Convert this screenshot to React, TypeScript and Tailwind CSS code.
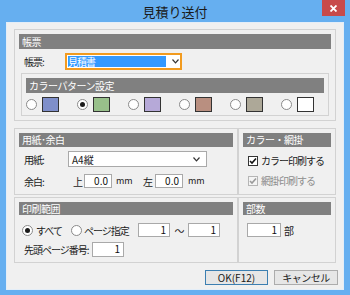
import React from "react";

const Radio = ({ checked = false }: { checked?: boolean }) => (
  <div className="w-[11px] h-[11px] rounded-full border border-[#8a8a8a] bg-white flex items-center justify-center shrink-0">
    {checked && <div className="w-[5px] h-[5px] rounded-full bg-[#1a1a1a]" />}
  </div>
);

const Check = ({ disabled = false }: { disabled?: boolean }) => (
  <div
    className={
      disabled
        ? "w-[10px] h-[10px] border border-[#b5b5b5] bg-[#f4f4f4] flex items-center justify-center shrink-0"
        : "w-[10px] h-[10px] border border-[#333333] bg-white flex items-center justify-center shrink-0"
    }
  >
    <svg width="8" height="8" viewBox="0 0 8 8">
      <path
        d="M1 4 L3 6 L7 1.5"
        fill="none"
        stroke={disabled ? "#9a9a9a" : "#111"}
        strokeWidth="1.6"
      />
    </svg>
  </div>
);

const Field = ({ value, className }: { value: string; className: string }) => (
  <div
    className={`bg-white border border-[#a9a9a9] text-right pr-[3px] text-[10px] leading-[12px] tracking-normal text-[#111] ${className}`}
  >
    {value}
  </div>
);

const Header = ({ title, className }: { title: string; className: string }) => (
  <div className={`bg-[#808080] text-white text-[10px] tracking-[-0.5px] pl-[3px] whitespace-nowrap ${className}`}>
    {title}
  </div>
);

const swatches = ["#7f8fca", "#98c08b", "#b6a9d8", "#b98f80", "#ada898", "#ffffff"];

export default function App() {
  return (
    <div className="w-[350px] h-[295px] bg-[#66aff0] flex flex-col font-['Noto_Sans_CJK_JP',sans-serif] text-[#1a1a1a] overflow-hidden whitespace-nowrap">
      {/* title bar */}
      <div className="h-[22px] relative flex items-center justify-center shrink-0">
        <span className="text-[13px] text-[#1a1a1a] leading-none">見積り送付</span>
        <div className="absolute right-[5px] top-0 w-[23px] h-[16px] bg-[#c84a4a] flex items-center justify-center">
          <svg width="7" height="7" viewBox="0 0 7 7">
            <path d="M0.5 0.5 L6.5 6.5 M6.5 0.5 L0.5 6.5" stroke="#fff" strokeWidth="1.8" />
          </svg>
        </div>
      </div>

      {/* client */}
      <div className="mx-[6px] h-[268px] bg-[#f0f0f0] border border-[#e4eef8] pl-[7px] pr-[7px] pt-[6px] flex flex-col text-[10px] tracking-[-1px]">
        {/* 帳票 */}
        <div className="w-[322px] border border-[#d2d2d2] p-[4px] pb-[4px]">
          <Header title="帳票" className="h-[15px] leading-[15px]" />
          <div className="flex items-center mt-[4px] h-[17px]">
            <span className="w-[46px] pl-[5px]">帳票:</span>
            <div className="w-[117px] h-[17px] border-[2px] border-[#f29b1f] bg-white flex items-center pl-[1px]">
              <span className="bg-[#3399ff] text-white leading-[11px] w-[98px] h-[11px]">見積書</span>
              <svg className="ml-[6px]" width="7" height="5" viewBox="0 0 7 5">
                <path d="M0.5 0.5 L3.5 3.8 L6.5 0.5" fill="none" stroke="#333" strokeWidth="1.2" />
              </svg>
            </div>
          </div>
          <div className="mt-[3px] mx-[2px] border border-[#d2d2d2] p-[4px] pb-[3px]">
            <Header title="カラーパターン設定" className="h-[15px] leading-[15px]" />
            <div className="flex items-center gap-[18px] mt-[4px] h-[15px]">
              {swatches.map((c, i) => (
                <div key={c} className="flex items-center gap-[5px]">
                  <Radio checked={i === 1} />
                  <div className="w-[17px] h-[15px] border border-[#333]" style={{ backgroundColor: c }} />
                </div>
              ))}
            </div>
          </div>
        </div>

        {/* 用紙・余白 / カラー・網掛 */}
        <div className="flex mt-[7px] h-[67px]">
          <div className="w-[224px] border border-[#d2d2d2] p-[4px]">
            <Header title="用紙･余白" className="h-[14px] leading-[14px]" />
            <div className="flex items-center mt-[4px] h-[16px]">
              <span className="w-[49px] pl-[5px]">用紙:</span>
              <div className="w-[139px] h-[16px] border border-[#a9a9a9] bg-white flex items-center justify-between pl-[3px] pr-[6px]">
                <span className="tracking-normal">A4縦</span>
                <svg width="7" height="5" viewBox="0 0 7 5">
                  <path d="M0.5 0.5 L3.5 3.8 L6.5 0.5" fill="none" stroke="#333" strokeWidth="1.2" />
                </svg>
              </div>
            </div>
            <div className="flex items-center mt-[7px] h-[14px]">
              <span className="w-[54px] pl-[5px]">余白:</span>
              <span className="w-[11px]">上</span>
              <Field value="0.0" className="w-[28px] h-[14px]" />
              <span className="ml-[4px] w-[27px] text-[9px] tracking-normal">mm</span>
              <span className="w-[12px]">左</span>
              <Field value="0.0" className="w-[28px] h-[14px]" />
              <span className="ml-[5px] text-[9px] tracking-normal">mm</span>
            </div>
          </div>
          <div className="w-[98px] border border-[#d2d2d2] p-[4px]">
            <Header title="カラー・網掛" className="h-[14px] leading-[14px]" />
            <div className="flex items-center gap-[3px] pl-[5px] mt-[6px]">
              <Check />
              <span>カラー印刷する</span>
            </div>
            <div className="flex items-center gap-[3px] pl-[5px] mt-[5px] text-[#8d8d8d]">
              <Check disabled />
              <span>網掛印刷する</span>
            </div>
          </div>
        </div>

        {/* 印刷範囲 / 部数 */}
        <div className="flex mt-[2px] h-[66px]">
          <div className="w-[224px] border border-[#d2d2d2] p-[4px]">
            <Header title="印刷範囲" className="h-[13px] leading-[13px]" />
            <div className="flex items-center mt-[8px] h-[14px]">
              <div className="pl-[3px]">
                <Radio checked />
              </div>
              <span className="ml-[3px] w-[35px]">すべて</span>
              <Radio />
              <span className="ml-[2px] w-[54px]">ページ指定</span>
              <Field value="1" className="w-[32px] h-[14px]" />
              <span className="w-[18px] text-center">〜</span>
              <Field value="1" className="w-[32px] h-[14px]" />
            </div>
            <div className="flex items-center mt-[5px] h-[15px]">
              <span className="w-[73px] pl-[5px]">先頭ページ番号:</span>
              <Field value="1" className="w-[32px] h-[15px]" />
            </div>
          </div>
          <div className="w-[98px] border border-[#d2d2d2] p-[4px]">
            <Header title="部数" className="h-[13px] leading-[13px]" />
            <div className="flex items-center mt-[8px] h-[14px] pl-[4px]">
              <Field value="1" className="w-[34px] h-[14px]" />
              <span className="ml-[3px]">部</span>
            </div>
          </div>
        </div>

        {/* buttons */}
        <div className="flex justify-end gap-[6px] mt-[7px] -mr-[2px] tracking-normal">
          <button className="w-[63px] h-[15px] border border-[#3c7fb1] bg-[#e6e6e6] leading-[13px]">OK(F12)</button>
          <button className="w-[64px] h-[15px] border border-[#acacac] bg-[#e6e6e6] leading-[13px] tracking-[-0.5px]">キャンセル</button>
        </div>
      </div>
    </div>
  );
}
